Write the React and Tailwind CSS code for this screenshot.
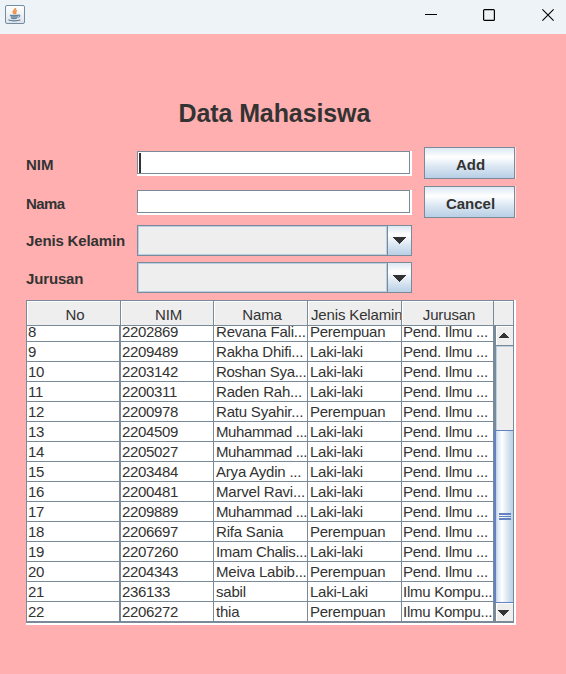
const rows = [
  ['8', '2202869', 'Revana Fali...', 'Perempuan', 'Pend. Ilmu ...'],
  ['9', '2209489', 'Rakha Dhifi...', 'Laki-laki', 'Pend. Ilmu ...'],
  ['10', '2203142', 'Roshan Sya...', 'Laki-laki', 'Pend. Ilmu ...'],
  ['11', '2200311', 'Raden Rah...', 'Laki-laki', 'Pend. Ilmu ...'],
  ['12', '2200978', 'Ratu Syahir...', 'Perempuan', 'Pend. Ilmu ...'],
  ['13', '2204509', 'Muhammad ...', 'Laki-laki', 'Pend. Ilmu ...'],
  ['14', '2205027', 'Muhammad ...', 'Laki-laki', 'Pend. Ilmu ...'],
  ['15', '2203484', 'Arya Aydin ...', 'Laki-laki', 'Pend. Ilmu ...'],
  ['16', '2200481', 'Marvel Ravi...', 'Laki-laki', 'Pend. Ilmu ...'],
  ['17', '2209889', 'Muhammad ...', 'Laki-laki', 'Pend. Ilmu ...'],
  ['18', '2206697', 'Rifa Sania', 'Perempuan', 'Pend. Ilmu ...'],
  ['19', '2207260', 'Imam Chalis...', 'Laki-laki', 'Pend. Ilmu ...'],
  ['20', '2204343', 'Meiva Labib...', 'Perempuan', 'Pend. Ilmu ...'],
  ['21', '236133', 'sabil', 'Laki-Laki', 'Ilmu Kompu...'],
  ['22', '2206272', 'thia', 'Perempuan', 'Ilmu Kompu...'],
];

const headers = ['No', 'NIM', 'Nama', 'Jenis Kelamin', 'Jurusan'];

const cellStyles = [
  'border-r-2 pl-px tracking-[-0.34px]',
  'border-r pl-px tracking-[-0.34px]',
  'border-r pl-0.5',
  'border-r pl-0.5 tracking-[-0.25px]',
  'border-r pl-px tracking-[-0.25px]',
];

// Long names are tightened so that their ellipsis stays inside the column.
const nameTracking = {
  'Muhammad ...': 'tracking-[-0.4px]',
  'Roshan Sya...': 'tracking-[-0.3px]',
  'Imam Chalis...': 'tracking-[-0.35px]',
};

function Arrow({ up = false, width = 13 }) {
  const height = width === 13 ? 7 : 6;
  return (
    <svg width={width} height={height} viewBox="0 0 13 7" preserveAspectRatio="none" shapeRendering="crispEdges">
      <path d={up ? 'M0 7h13L6.5 0z' : 'M0 0h13L6.5 7z'} fill="#333" />
    </svg>
  );
}

function TitleBar() {
  return (
    <header className="flex h-[34px] items-start justify-between bg-[#eef3f7]">
      <svg className="ml-[5px] mt-[5px]" width="20" height="19" viewBox="0 0 20 19" fill="none">
        <defs>
          <linearGradient id="tile" x1="0" y1="0" x2="0" y2="1">
            <stop offset="0" stopColor="#fff" />
            <stop offset="1" stopColor="#dfe3e8" />
          </linearGradient>
        </defs>
        <rect x=".5" y=".5" width="19" height="18" rx="1.5" fill="url(#tile)" stroke="#728ca3" />
        <path d="M10.4 3c.8 1.800-2.600 2.500-2.100 4.200.2.800.9 1.200.9 2M11.900 5.500c-1.900.9-2 1.500-1.400 2.300.4.600.2 1-.1 1.400" stroke="#ee9350" strokeWidth="1.700" />
        <path d="M5 9.800h8.300c0 2-1 3.400-2.300 3.700H7.500C6 13 5 11.800 5 9.800z" fill="#8aa3b8" />
        <path d="M5 10.200c2 .7 6 .7 8.200 0M6 12.900c1.500.7 4.500.7 6 0M13.200 10.200c2.300-.5 2.200 1.800-.6 2.300M3.400 14.800c2 1.400 10 1.400 12 0" stroke="#5f7f9c" strokeWidth="1.100" />
      </svg>
      <div className="mr-3 mt-[9px] flex items-start gap-[46px] text-black">
        <svg width="12" height="12" viewBox="0 0 12 12"><path d="M0 5.500h12" stroke="currentColor" /></svg>
        <svg className="mr-px" width="12" height="12" viewBox="0 0 12 12" fill="none"><rect x=".6" y=".6" width="10.800" height="10.800" rx="1" stroke="currentColor" strokeWidth="1.200" /></svg>
        <svg width="12" height="12" viewBox="0 0 12 12"><path d="M.4.400l11.200 11.200M11.600.4L.4 11.600" stroke="currentColor" strokeWidth="1.100" /></svg>
      </div>
    </header>
  );
}

function TextField({ caret = false }) {
  return (
    <div className="h-[25px] w-[275px] bg-white pb-0.5 pr-0.5">
      <div className="h-full border border-[#7a8a99] pl-px pt-px">
        {caret && <div className="h-5 w-0.5 bg-[#333]" />}
      </div>
    </div>
  );
}

function ComboBox({ arrowClass = '' }) {
  return (
    <div className="flex h-[31px] w-[275px] border border-[#7a8a99]">
      <div className="flex-1 border border-[#b8cfe5] bg-[#eee]" />
      <div className={`flex w-6 items-center justify-center border-l border-[#7a8a99] bg-linear-to-b from-[#dde8f3] via-white via-30% to-[#b8cfe5] ${arrowClass}`}>
        <Arrow />
      </div>
    </div>
  );
}

function Button({ children }) {
  return (
    <div className="border-r border-white/60">
      <button className="flex h-8 w-[91px] items-center justify-center border border-[#7a8a99] bg-[linear-gradient(#dde8f3,#fff_30%,#dde8f3_60%,#b8cfe5)] pl-0.5 pt-1 text-[15px] leading-4 font-bold">
        {children}
      </button>
    </div>
  );
}

function Label({ children, className = '' }) {
  return <span className={`w-[111px] whitespace-nowrap text-[15px] leading-4 font-bold ${className}`}>{children}</span>;
}

function ScrollBar() {
  return (
    <div className="flex w-[19px] flex-col border-l-2 border-[#7a8a99] bg-[#eee]">
      <div className="flex h-[19px] items-center justify-center border-l border-t border-white bg-[#eee] pb-0.5 pr-0.5"><Arrow up width={10} /></div>
      <div className="h-[85px] border-t border-[#7a8a99] shadow-[inset_1px_1px_0_#b8cfe5]" />
      <div className="-ml-0.5 flex h-[173px] flex-col items-center justify-center gap-px border-y border-l-2 border-[#6382bf] bg-[linear-gradient(90deg,#b8cfe5,#dde8f3_10%,#fff_35%,#dde8f3_65%,#b8cfe5)]">
        <div className="h-0.5 w-3 bg-[#6382bf]" />
        <div className="h-px w-3 bg-[#6382bf]" />
        <div className="h-0.5 w-3 bg-[#6382bf]" />
      </div>
      <div className="flex flex-1 items-center justify-center border-l border-t border-white pr-[3px]"><Arrow width={11} /></div>
    </div>
  );
}

function StudentTable() {
  return (
    <div className="h-[325px] w-[490px] bg-white pb-[2px] pr-[2px]">
      <div className="flex h-full flex-col border border-b-2 border-[#7a8a99]">
        <div className="grid h-[25px] shrink-0 grid-cols-[94px_93px_94px_94px_92px_1fr] border-b border-[#7a8a99] bg-[#eee]">
          {headers.map((header) => (
            <div key={header} className="overflow-hidden whitespace-nowrap border-r border-[#7a8a99] pl-[3px] pt-[5px] text-center tracking-[-0.15px] shadow-[inset_1px_1px_0_#fff]">
              {header}
            </div>
          ))}
          <div className="shadow-[inset_0_1px_0_#fff]" />
        </div>
        <div className="flex min-h-0 flex-1">
          <div className="flex w-[467px] flex-col justify-end overflow-hidden">
            {rows.map((row) => (
              <div key={row[0]} className="grid h-5 shrink-0 grid-cols-[94px_93px_94px_94px_92px] border-b border-[#7a8a99] last:h-[19px] last:border-b-0">
                {row.map((value, column) => (
                  <div
                    key={column}
                    className={`overflow-hidden whitespace-nowrap border-[#7a8a99] pt-px ${cellStyles[column]} ${column === 2 ? nameTracking[value] ?? 'tracking-[-0.2px]' : ''}`}
                  >
                    {value}
                  </div>
                ))}
              </div>
            ))}
          </div>
          <ScrollBar />
        </div>
      </div>
    </div>
  );
}

export default function App() {
  return (
    <div className="h-[674px] w-[566px] overflow-hidden bg-[#ffafaf] font-['Liberation_Sans',Arial,sans-serif] text-[15px] leading-[18px] text-[#333]">
      <TitleBar />
      <main className="pl-[26px]">
        <h1 className="ml-[152.5px] pt-[64px] text-[25px] leading-[30px] font-bold tracking-[-0.1px] whitespace-nowrap">Data Mahasiswa</h1>
        <div className="mt-[19px] flex h-[153px] gap-3">
          <div className="pt-1">
            <div className="flex h-[25px] items-center"><Label className="pt-0.5">NIM</Label><TextField caret /></div>
            <div className="mt-[14px] flex h-[25px] items-center"><Label className="pt-0.5 tracking-[-0.6px]">Nama</Label><TextField /></div>
            <div className="mt-[10px] flex h-[31px] items-center"><Label className="tracking-[-0.15px]">Jenis Kelamin</Label><ComboBox /></div>
            <div className="mt-[6px] flex h-[31px] items-center"><Label className="pt-0.5 tracking-[-0.15px]">Jurusan</Label><ComboBox arrowClass="pt-0.5" /></div>
          </div>
          <div className="flex flex-col gap-[7px]">
            <Button>Add</Button>
            <Button>Cancel</Button>
          </div>
        </div>
        <StudentTable />
      </main>
    </div>
  );
}
